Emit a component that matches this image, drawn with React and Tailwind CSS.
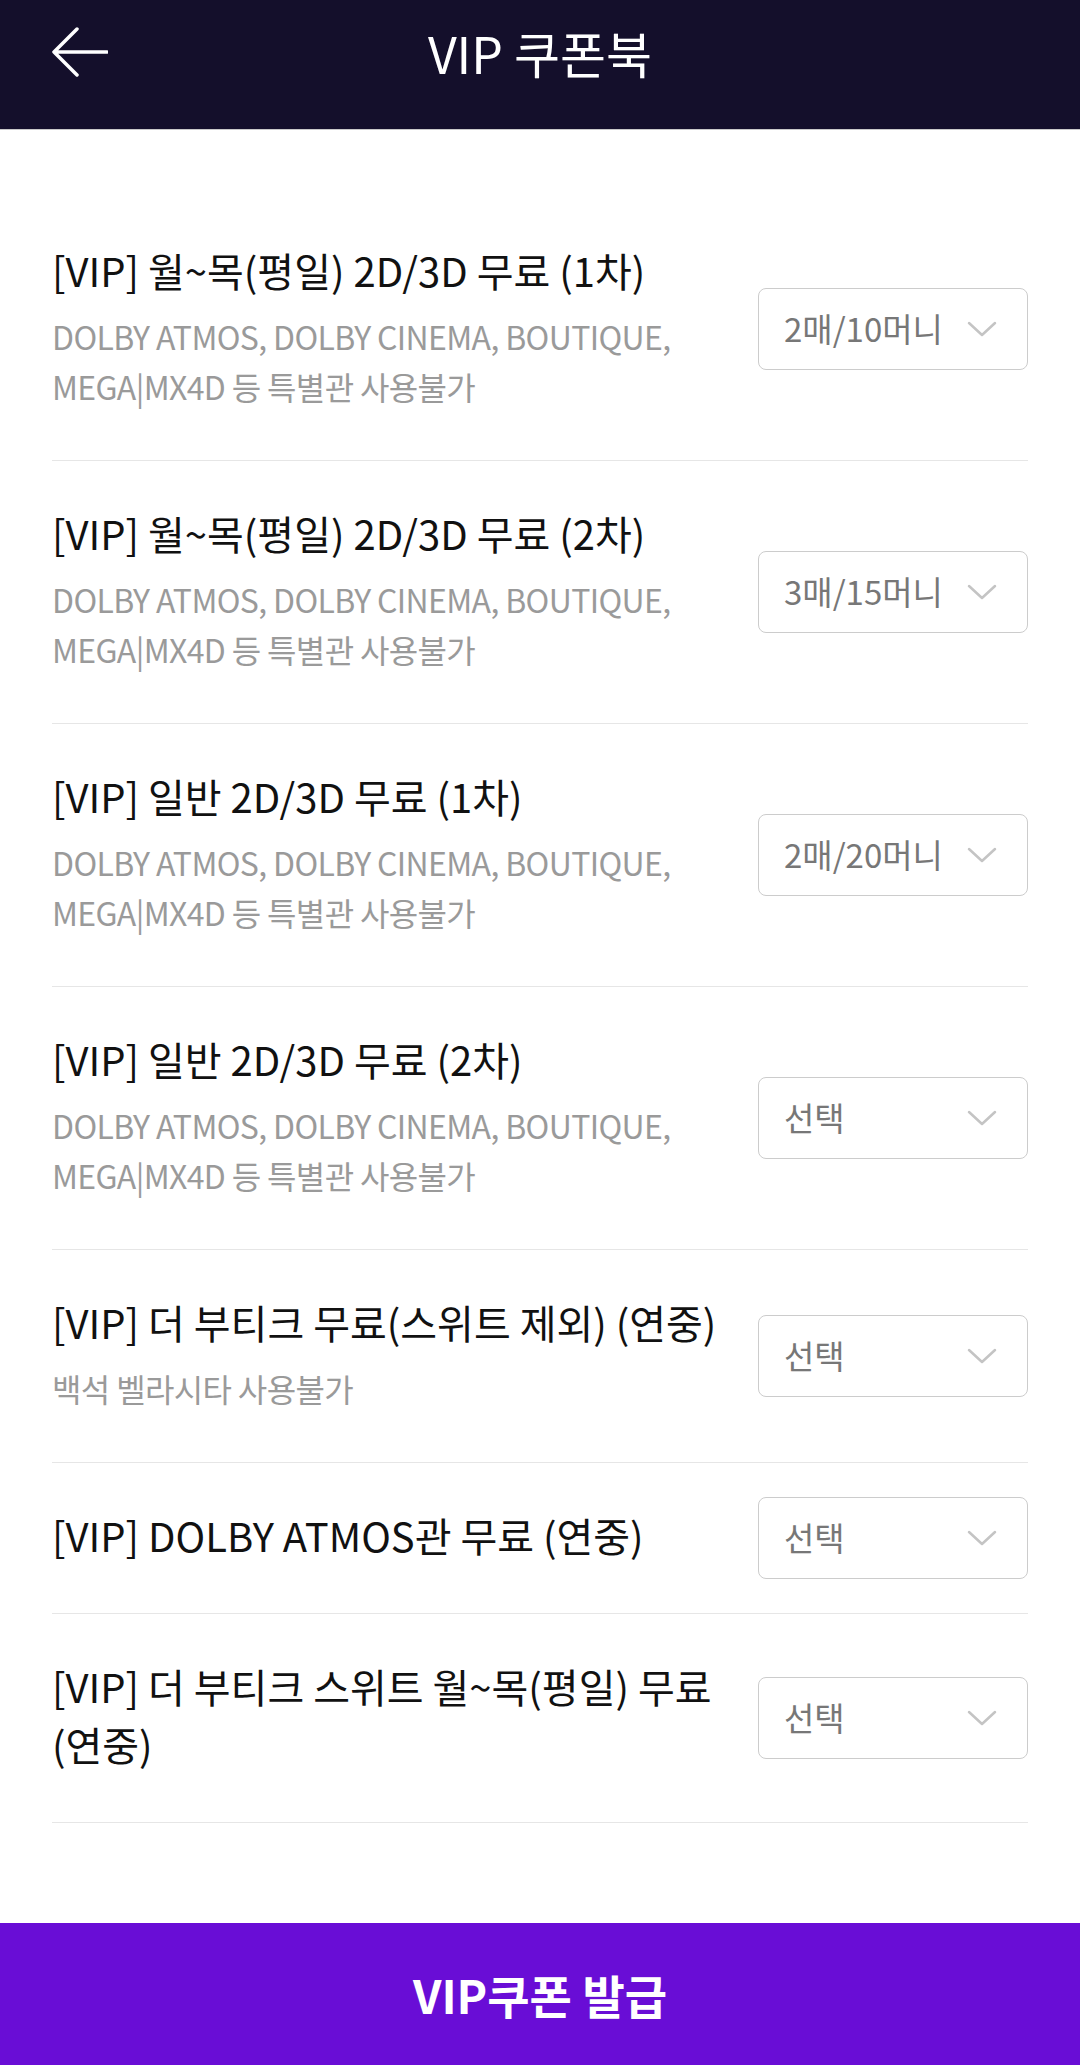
const coupons = [
  {
    title: '[VIP] 월~목(평일) 2D/3D 무료 (1차)',
    desc: ['DOLBY ATMOS, DOLBY CINEMA, BOUTIQUE,', 'MEGA|MX4D 등 특별관 사용불가'],
    value: '2매/10머니',
  },
  {
    title: '[VIP] 월~목(평일) 2D/3D 무료 (2차)',
    desc: ['DOLBY ATMOS, DOLBY CINEMA, BOUTIQUE,', 'MEGA|MX4D 등 특별관 사용불가'],
    value: '3매/15머니',
  },
  {
    title: '[VIP] 일반 2D/3D 무료 (1차)',
    desc: ['DOLBY ATMOS, DOLBY CINEMA, BOUTIQUE,', 'MEGA|MX4D 등 특별관 사용불가'],
    value: '2매/20머니',
  },
  {
    title: '[VIP] 일반 2D/3D 무료 (2차)',
    desc: ['DOLBY ATMOS, DOLBY CINEMA, BOUTIQUE,', 'MEGA|MX4D 등 특별관 사용불가'],
    value: null,
  },
  {
    title: '[VIP] 더 부티크 무료(스위트 제외) (연중)',
    desc: ['백석 벨라시타 사용불가'],
    value: null,
  },
  {
    title: '[VIP] DOLBY ATMOS관 무료 (연중)',
    desc: [],
    value: null,
  },
  {
    title: '[VIP] 더 부티크 스위트 월~목(평일) 무료 (연중)',
    desc: [],
    value: null,
  },
];

function Chevron() {
  return (
    <svg width="30" height="16" viewBox="0 0 30 16" fill="none">
      <path d="M2 2L15 14L28 2" stroke="#c4c4c4" strokeWidth="2.5" strokeLinecap="round" strokeLinejoin="round" />
    </svg>
  );
}

function CouponRow({ coupon }) {
  return (
    <div className="flex items-center gap-[20px] border-b border-[#e6e6e6]">
      <div className="flex-1 min-w-0 pt-[43px] pb-[49px]">
        <div className="text-[40px] leading-[58px] text-[#111111]">{coupon.title}</div>
        {coupon.desc.length > 0 && (
          <div className="mt-[12px]">
            {coupon.desc.map((line) => (
              <div key={line} className="text-[32px] leading-[50px] text-[#9a9a9a] tracking-[-0.02em]">
                {line}
              </div>
            ))}
          </div>
        )}
      </div>
      <button className="w-[270px] h-[82px] shrink-0 flex items-center justify-between pl-[25px] pr-[30px] border border-[#cccccc] rounded-[8px] bg-white">
        <span className="text-[33px] text-[#777777]">{coupon.value || '선택'}</span>
        <Chevron />
      </button>
    </div>
  );
}

export default function App() {
  return (
    <div
      className="min-h-screen flex flex-col bg-white"
      style={{ fontFamily: '"Noto Sans CJK KR", "Noto Sans", sans-serif' }}
    >
      {/* Header */}
      <header className="h-[130px] bg-[#140f2b] border-b border-[#c9c9c9]">
        <div className="h-[104px] grid grid-cols-[1fr_auto_1fr] items-center px-[52px]">
          <button className="justify-self-start">
            <svg width="56" height="50" viewBox="0 0 56 50" fill="none">
              <path d="M2 25H55M25 2L2 25L25 48" stroke="white" strokeWidth="3.5" strokeLinecap="round" strokeLinejoin="round" />
            </svg>
          </button>
          <h1 className="text-[50px] text-white font-normal">VIP 쿠폰북</h1>
          <div />
        </div>
      </header>

      {/* Coupon list */}
      <div className="flex-1 px-[52px] pt-[68px]">
        {coupons.map((c) => (
          <CouponRow key={c.title} coupon={c} />
        ))}
      </div>

      {/* Issue button */}
      <button className="h-[142px] w-full bg-[#690dd6] flex items-center justify-center">
        <span className="text-[46px] font-bold text-white">VIP쿠폰 발급</span>
      </button>
    </div>
  );
}
